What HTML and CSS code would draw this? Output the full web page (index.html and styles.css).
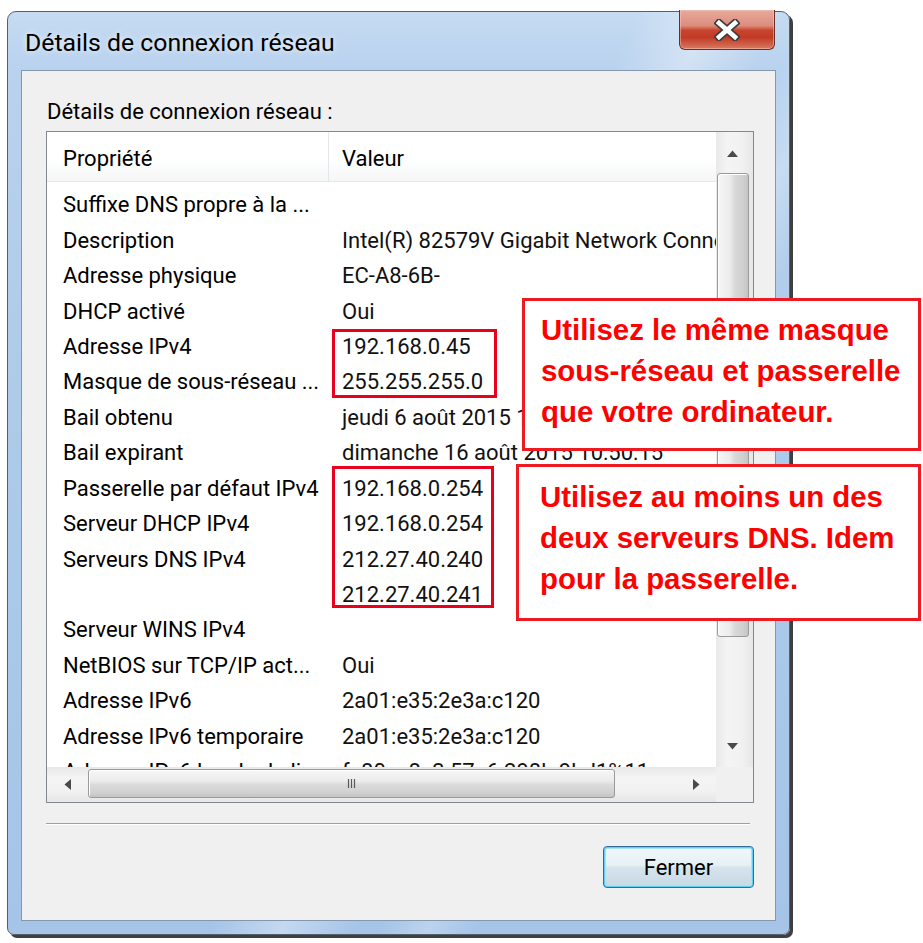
FILE: index.html
```html
<!DOCTYPE html>
<html lang="fr">
<head>
<meta charset="utf-8">
<title>Détails de connexion réseau</title>
<link rel="stylesheet" href="styles.css">
</head>
<body>
<div class="window">
  <div class="titlebar">
    <span class="title">Détails de connexion réseau</span>
    <div class="close-btn">
      <svg class="close-x" width="26" height="22" viewBox="0 0 26 22">
        <path d="M5 4 L21 18 M21 4 L5 18" stroke="#3d3d3d" stroke-width="8" stroke-linecap="square" fill="none"/>
        <path d="M5 4 L21 18 M21 4 L5 18" stroke="#ffffff" stroke-width="4.6" stroke-linecap="square" fill="none"/>
      </svg>
    </div>
  </div>
  <div class="panel">
    <div class="label">Détails de connexion réseau :</div>
    <div class="listview">
      <div class="list-main">
        <div class="list-content">
          <div class="header">
            <div class="col1">Propriété</div>
            <div class="col2">Valeur</div>
          </div>
          <div class="rows">
            <div class="row"><div class="col1">Suffixe DNS propre à la ...</div><div class="col2"></div></div>
            <div class="row"><div class="col1">Description</div><div class="col2">Intel(R) 82579V Gigabit Network Connection</div></div>
            <div class="row"><div class="col1">Adresse physique</div><div class="col2">EC-A8-6B-</div></div>
            <div class="row"><div class="col1">DHCP activé</div><div class="col2">Oui</div></div>
            <div class="row"><div class="col1">Adresse IPv4</div><div class="col2">192.168.0.45</div></div>
            <div class="row"><div class="col1">Masque de sous-réseau ...</div><div class="col2">255.255.255.0</div></div>
            <div class="row"><div class="col1">Bail obtenu</div><div class="col2">jeudi 6 août 2015 10:50:15</div></div>
            <div class="row"><div class="col1">Bail expirant</div><div class="col2">dimanche 16 août 2015 10:50:15</div></div>
            <div class="row"><div class="col1">Passerelle par défaut IPv4</div><div class="col2">192.168.0.254</div></div>
            <div class="row"><div class="col1">Serveur DHCP IPv4</div><div class="col2">192.168.0.254</div></div>
            <div class="row"><div class="col1">Serveurs DNS IPv4</div><div class="col2">212.27.40.240</div></div>
            <div class="row"><div class="col1"></div><div class="col2">212.27.40.241</div></div>
            <div class="row"><div class="col1">Serveur WINS IPv4</div><div class="col2"></div></div>
            <div class="row"><div class="col1">NetBIOS sur TCP/IP act...</div><div class="col2">Oui</div></div>
            <div class="row"><div class="col1">Adresse IPv6</div><div class="col2">2a01:e35:2e3a:c120</div></div>
            <div class="row"><div class="col1">Adresse IPv6 temporaire</div><div class="col2">2a01:e35:2e3a:c120</div></div>
            <div class="row"><div class="col1">Adresse IPv6 locale de lien</div><div class="col2">fe80::a8c3:57e6:298b:9bd1%11</div></div>
          </div>
        </div>
        <div class="vscroll">
          <div class="arrow-box arrow-up">
            <svg width="11" height="7" viewBox="0 0 11 7"><path d="M0 7 L5.5 0.5 L11 7 Z" fill="#4a4a4a"/></svg>
          </div>
          <div class="vtrack">
            <div class="vthumb"></div>
          </div>
          <div class="arrow-box arrow-down">
            <svg width="11" height="7" viewBox="0 0 11 7"><path d="M0 0 L5.5 6.5 L11 0 Z" fill="#4a4a4a"/></svg>
          </div>
        </div>
      </div>
      <div class="hscroll-row">
        <div class="hscroll">
          <div class="harrow harrow-left">
            <svg width="7" height="11" viewBox="0 0 7 11"><path d="M7 0 L0.5 5.5 L7 11 Z" fill="#4a4a4a"/></svg>
          </div>
          <div class="htrack">
            <div class="hthumb">
              <svg class="grip" width="9" height="9" viewBox="0 0 9 9">
                <path d="M1.5 0 V9 M4.5 0 V9 M7.5 0 V9" stroke="#5a5a5a" stroke-width="1.2"/>
              </svg>
            </div>
          </div>
          <div class="harrow harrow-right">
            <svg width="7" height="11" viewBox="0 0 7 11"><path d="M0 0 L6.5 5.5 L0 11 Z" fill="#4a4a4a"/></svg>
          </div>
        </div>
        <div class="corner"></div>
      </div>
    </div>
    <div class="separator"></div>
    <div class="buttons">
      <button class="btn" type="button">Fermer</button>
    </div>
  </div>
</div>

<div class="mark mark-a"></div>
<div class="mark mark-b"></div>

<div class="note note-1">Utilisez le même masque<br>sous-réseau et passerelle<br>que votre ordinateur.</div>
<div class="note note-2">Utilisez au moins un des<br>deux serveurs DNS. Idem<br>pour la passerelle.</div>
</body>
</html>
```

FILE: styles.css
```css
* {
  box-sizing: border-box;
}

html,
body {
  margin: 0;
  padding: 0;
  background: #ffffff;
}

body {
  position: relative;
  width: 923px;
  height: 943px;
  overflow: hidden;
  font-family: Roboto, "Noto Sans", "Liberation Sans", sans-serif;
  color: #000;
}

/* ---------- window frame ---------- */
.window {
  margin: 11px 0 0 7px;
  width: 783px;
  height: 924px;
  border: 1px solid #55606d;
  border-radius: 9px 9px 7px 7px;
  box-shadow: 3px 3px 0 #3f3f3f;
  background:
    linear-gradient(115deg, rgba(255,255,255,0) 52%, rgba(255,255,255,0.35) 58%, rgba(255,255,255,0) 64%),
    linear-gradient(115deg, rgba(255,255,255,0) 66%, rgba(255,255,255,0.25) 70%, rgba(255,255,255,0) 74%),
    linear-gradient(180deg, #c6dbf2 0%, #b9d2ee 6%, #aecbea 40%, #a5c4e8 100%);
  display: flex;
  flex-direction: column;
  padding: 0 13px 13px 13px;
}

.titlebar {
  display: flex;
  align-items: flex-start;
  height: 58px;
  flex: none;
  padding-left: 4px;
}

.title {
  margin-top: 17px;
  font-size: 24.8px;
  line-height: 28px;
  color: #000;
  text-shadow: 0 0 6px rgba(255,255,255,0.9);
}

.close-btn {
  margin-left: auto;
  margin-right: 1px;
  margin-top: -2px;
  width: 96px;
  height: 40px;
  border: 1px solid #6a3027;
  border-top: none;
  border-radius: 0 0 6px 6px;
  background: linear-gradient(180deg, #e7aa9c 0%, #dd8d7d 40%, #c8452f 52%, #c23a26 70%, #d2634c 90%, #dc7c63 100%);
  box-shadow: inset 0 0 0 1px rgba(255,210,200,0.45);
  display: flex;
  align-items: center;
  justify-content: center;
}

.close-x {
  display: block;
}

/* ---------- client panel ---------- */
.panel {
  flex: 1;
  background: #f0f0f0;
  border: 1px solid #8597ad;
  padding: 0 21px 0 24px;
  display: flex;
  flex-direction: column;
}

.label {
  margin-top: 28px;
  margin-bottom: 6px;
  padding-left: 1px;
  font-size: 22px;
  line-height: 26px;
  white-space: nowrap;
}

.listview {
  width: 708px;
  height: 672px;
  border: 1px solid #828790;
  background: #ffffff;
  display: flex;
  flex-direction: column;
  flex: none;
}

.list-main {
  height: 635px;
  display: flex;
  flex: none;
}

.list-content {
  flex: 1;
  overflow: hidden;
  font-size: 22px;
}

.header {
  display: flex;
  height: 50px;
  border-bottom: 1px solid #e3e6ea;
  background: linear-gradient(180deg, #ffffff 0%, #ffffff 55%, #f5f6f7 100%);
}

.header .col1 {
  width: 282px;
  flex: none;
  padding-left: 16px;
  padding-top: 14px;
  border-right: 1px solid #e3e6ea;
  line-height: 26px;
}

.header .col2 {
  flex: 1;
  padding-left: 13px;
  padding-top: 14px;
  line-height: 26px;
}

.rows {
  padding-top: 5px;
}

.row {
  display: flex;
  align-items: center;
  height: 35.45px;
  white-space: nowrap;
}

.row .col1 {
  width: 282px;
  flex: none;
  padding-left: 16px;
  overflow: hidden;
}

.row .col2 {
  flex: 1;
  padding-left: 13px;
  overflow: hidden;
  color: #111;
}

/* vertical scrollbar */
.vscroll {
  width: 37px;
  flex: none;
  background: linear-gradient(90deg, #e8e8e8 0%, #f4f4f4 30%, #f1f1f1 70%, #e6e6e6 100%);
  display: flex;
  flex-direction: column;
}

.arrow-box {
  display: flex;
  align-items: center;
  justify-content: center;
  flex: none;
  padding-right: 4px;
}

.arrow-up {
  height: 38px;
  padding-top: 4px;
}

.arrow-down {
  height: 40px;
  padding-bottom: 2px;
}

.vtrack {
  flex: 1;
  padding-top: 3px;
}

.vthumb {
  margin-left: 1px;
  margin-right: 4px;
  height: 464px;
  border: 1px solid #9a9a9a;
  border-radius: 3px;
  background: linear-gradient(90deg, #f6f6f6 0%, #ebebeb 40%, #d9d9d9 55%, #cfcfcf 85%, #c3c3c3 100%);
  box-shadow: inset 1px 1px 0 #ffffff;
}

/* horizontal scrollbar */
.hscroll-row {
  height: 35px;
  display: flex;
  flex: none;
}

.hscroll {
  flex: 1;
  display: flex;
  background: linear-gradient(180deg, #e8e8e8 0%, #f4f4f4 30%, #f1f1f1 70%, #e6e6e6 100%);
}

.harrow {
  display: flex;
  align-items: center;
  justify-content: center;
  flex: none;
}

.harrow-left {
  width: 40px;
}

.harrow-right {
  width: 39px;
  margin-left: auto;
}

.htrack {
  flex: 1;
  padding-top: 2px;
  padding-left: 1px;
}

.hthumb {
  width: 527px;
  height: 29px;
  border: 1px solid #9a9a9a;
  border-radius: 3px;
  background: linear-gradient(180deg, #f6f6f6 0%, #ececec 40%, #dadada 55%, #d0d0d0 85%, #c4c4c4 100%);
  box-shadow: inset 1px 1px 0 #ffffff;
  display: flex;
  align-items: center;
  justify-content: center;
}

.grip {
  display: block;
}

.corner {
  width: 37px;
  flex: none;
  background: #f0f0f0;
}

/* separator & buttons */
.separator {
  margin-top: 20px;
  width: 704px;
  height: 2px;
  border-top: 1px solid #a0a0a0;
  border-bottom: 1px solid #ffffff;
  flex: none;
}

.buttons {
  display: flex;
  justify-content: flex-end;
  margin-top: 21px;
}

.btn {
  width: 151px;
  height: 42px;
  border: 1px solid #2f6f9c;
  border-radius: 4px;
  background: linear-gradient(180deg, #f2f8fb 0%, #e6f0f5 45%, #d5e3ec 52%, #c8d9e4 100%);
  box-shadow: inset 0 0 0 1px #5fd0f5, inset 0 0 0 2px #a5e3f8;
  font-family: Roboto, "Noto Sans", sans-serif;
  font-size: 22px;
  color: #000;
  padding: 0;
}

/* ---------- annotation overlays ---------- */
.mark {
  position: absolute;
  border: 3px solid #e8001c;
}

.mark-a {
  left: 332px;
  top: 329px;
  width: 165px;
  height: 69px;
}

.mark-b {
  left: 332px;
  top: 466px;
  width: 162px;
  height: 142px;
}

.note {
  position: absolute;
  background: #ffffff;
  border: 3px solid #ee1a22;
  color: #ff0000;
  font-family: "Liberation Sans", Arial, sans-serif;
  font-weight: bold;
  font-size: 29.4px;
  line-height: 41px;
  padding-left: 16px;
  white-space: nowrap;
}

.note-1 {
  left: 522px;
  top: 298px;
  width: 399px;
  height: 153px;
  padding-top: 8px;
}

.note-2 {
  left: 516px;
  top: 464px;
  width: 405px;
  height: 157px;
  padding-left: 21px;
  padding-top: 9px;
}
```
